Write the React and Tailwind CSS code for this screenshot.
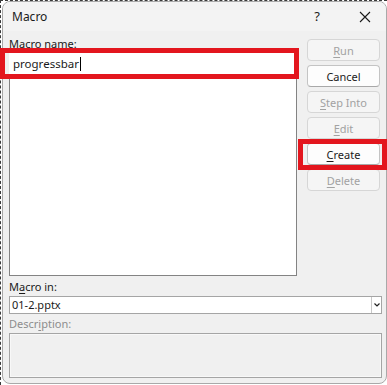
const font = { fontFamily: '"Noto Sans", "Liberation Sans", sans-serif' }

function Btn({ children, disabled }) {
  return (
    <div
      className={
        'h-[22px] w-[73px] rounded-[4px] border flex items-center justify-center text-[11px] leading-none ' +
        (disabled
          ? 'border-[#d6d6d6] bg-[#f5f5f5] text-[#a2a2a2]'
          : 'border-[#c4c4c4] border-b-[#a8a8a8] bg-[#fdfdfd] text-[#1b1b1b]')
      }
    >
      {children}
    </div>
  )
}

export default function App() {
  return (
    <div className="relative w-[387px] h-[385px] bg-white overflow-hidden" style={font}>
      <div className="w-[387px] h-[385px] border-t border-l border-dashed border-[#3a3a3a]">
        <div className="w-[385px] h-[383px] ml-[1px] rounded-[8px] border border-[#a9a9a9] bg-[#f0f0f0] flex flex-col overflow-hidden">
          <div className="h-[29px] bg-[#f3f3f3] flex items-center pl-[9px] text-[12px] text-[#1a1a1a]">
            <span>Macro</span>
            <span className="ml-auto mr-[39px] text-[13px]">?</span>
            <svg width="12" height="12" viewBox="0 0 12 12" className="mr-[15px]">
              <path d="M1 1 L11 11 M11 1 L1 11" stroke="#1a1a1a" strokeWidth="1.1" />
            </svg>
          </div>

          <div className="flex-1 px-[6px] text-[11px] text-[#1a1a1a]">
            <div className="flex">
              <div className="w-[289px] flex flex-col">
                <div className="h-[16px] mt-[5px] leading-[16px]">
                  <u className="underline-offset-2">M</u>acro name:
                </div>
                <div className="h-[21px] mt-[1px] w-[287px] bg-white flex items-center pl-[4px] text-[11.5px]">
                  progressbar<span className="inline-block w-[1px] h-[14px] bg-black ml-[1px]" />
                </div>
                <div className="h-[202px] bg-white border border-[#838383]" />
              </div>
              <div className="ml-[10px] pt-[8px] flex flex-col gap-[4px]">
                <Btn disabled><u className="underline-offset-2">R</u>un</Btn>
                <Btn>Cancel</Btn>
                <Btn disabled><u className="underline-offset-2">S</u>tep Into</Btn>
                <Btn disabled><u className="underline-offset-2">E</u>dit</Btn>
                <Btn><u className="underline-offset-2">C</u>reate</Btn>
                <Btn disabled><u className="underline-offset-2">D</u>elete</Btn>
              </div>
            </div>

            <div className="h-[16px] mt-[3px] leading-[16px]">
              M<u className="underline-offset-2">a</u>cro in:
            </div>
            <div className="h-[18px] mt-[1px] w-[373px] bg-white border border-[#a5a5a5] flex items-center">
              <span className="pl-[2px] flex-1">01-2.pptx</span>
              <div className="h-full w-[10px] border-l border-[#c8c8c8] flex items-center justify-center">
                <svg width="6" height="4" viewBox="0 0 6 4">
                  <path d="M0.5 0.5 L3 3 L5.5 0.5" stroke="#222" strokeWidth="1.2" fill="none" />
                </svg>
              </div>
            </div>
            <div className="h-[16px] mt-[2px] leading-[16px] text-[#8d8d8d]">
              Descr<u className="underline-offset-2">i</u>ption:
            </div>
            <div className="h-[45px] mt-[1px] w-[373px] border border-[#a5a5a5] bg-[#f0f0f0]">
              <div className="h-full border border-[#f8f8f8]" />
            </div>
          </div>
        </div>
      </div>

      <div className="absolute left-0 top-[48px] w-[299px] h-[31px] border-[5px] border-[#e3161e]" />
      <div className="absolute left-[298px] top-[139px] w-[89px] h-[31px] border-[5px] border-[#e3161e]" />
    </div>
  )
}
